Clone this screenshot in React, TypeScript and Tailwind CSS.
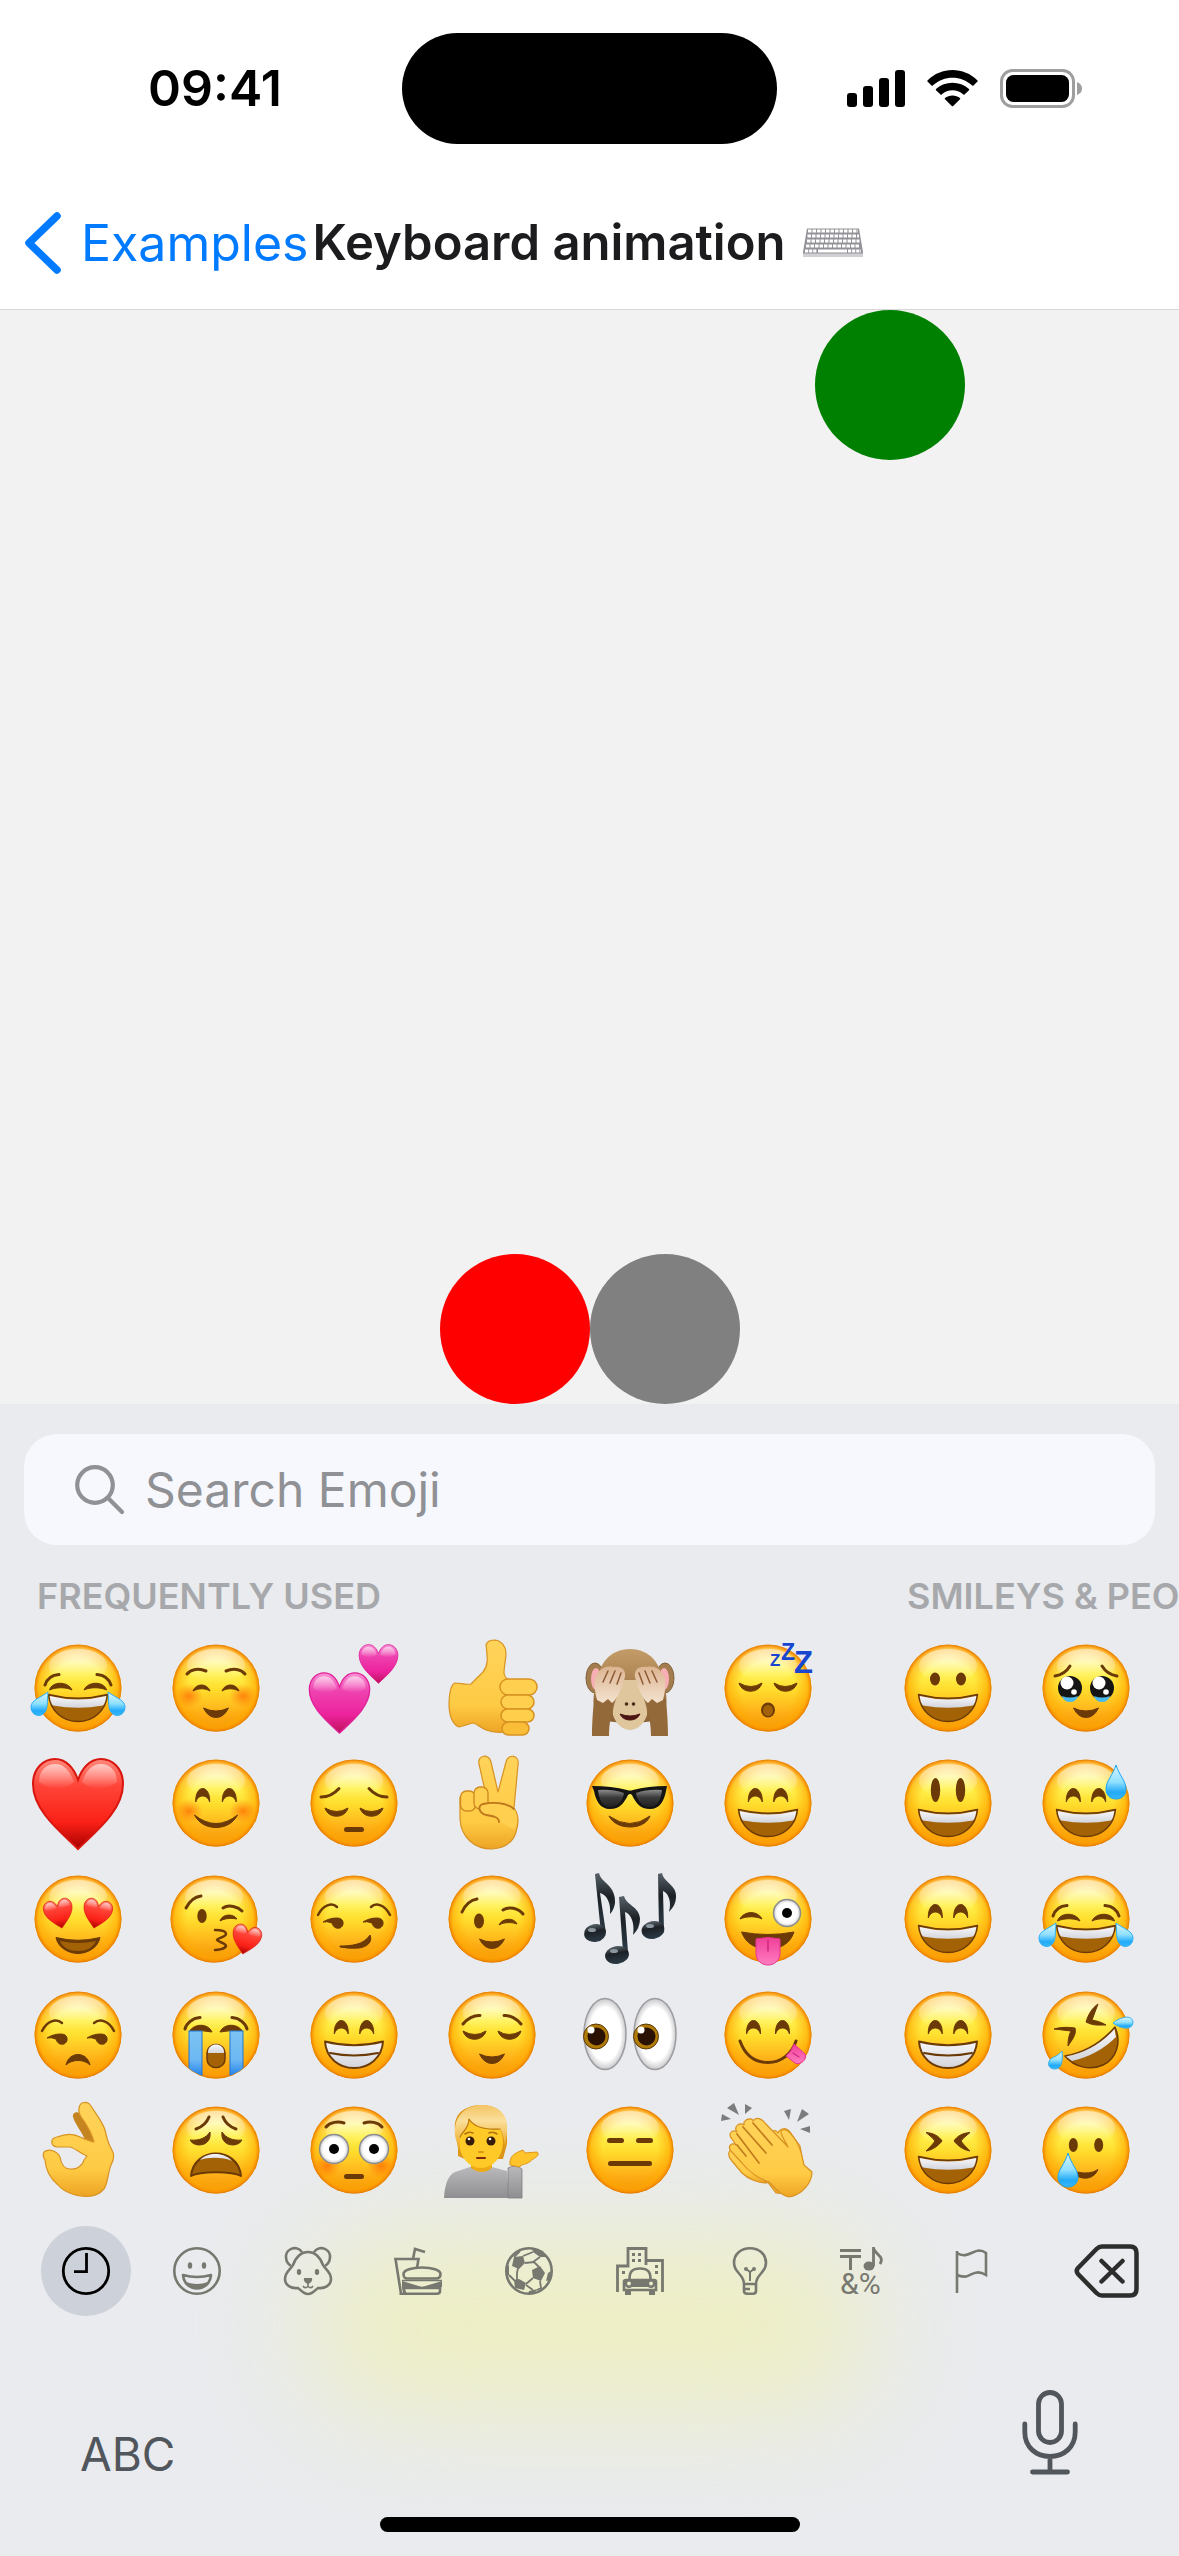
import React from "react";

type Kids = { children?: React.ReactNode };

const DARK = "#6b3a06";
const MOUTH = "#a36206";

function Defs() {
  return (
    <svg width="0" height="0" className="absolute" aria-hidden="true">
      <defs>
        <linearGradient id="face" x1="0" y1="0" x2="0" y2="1">
          <stop offset="0" stopColor="#fffce0" />
          <stop offset="0.12" stopColor="#fffcc4" />
          <stop offset="0.34" stopColor="#fff14c" />
          <stop offset="0.52" stopColor="#ffdc2c" />
          <stop offset="0.76" stopColor="#ffb41a" />
          <stop offset="1" stopColor="#f0900a" />
        </linearGradient>
        <radialGradient id="rim">
          <stop offset="0.62" stopColor="#ffab00" stopOpacity="0" />
          <stop offset="0.9" stopColor="#ffa600" stopOpacity="0.6" />
          <stop offset="0.96" stopColor="#f99200" stopOpacity="0.9" />
          <stop offset="1" stopColor="#df7800" stopOpacity="1" />
        </radialGradient>
        <radialGradient id="blush">
          <stop offset="0" stopColor="#ff6a00" stopOpacity="0.75" />
          <stop offset="1" stopColor="#ff7a10" stopOpacity="0" />
        </radialGradient>
        <linearGradient id="teeth" x1="0" y1="0" x2="0" y2="1">
          <stop offset="0" stopColor="#f7f7fa" />
          <stop offset="1" stopColor="#d3d5dc" />
        </linearGradient>
        <linearGradient id="water" x1="0" y1="0" x2="0" y2="1">
          <stop offset="0" stopColor="#d9f6ff" />
          <stop offset="0.5" stopColor="#8fe0ff" />
          <stop offset="0.8" stopColor="#22aaf8" />
          <stop offset="1" stopColor="#36b6f8" />
        </linearGradient>
        <linearGradient id="stream" x1="0" y1="0" x2="0" y2="1">
          <stop offset="0" stopColor="#7cc4f3" />
          <stop offset="0.6" stopColor="#6db8f3" />
          <stop offset="1" stopColor="#1477e6" />
        </linearGradient>
        <linearGradient id="red" x1="0" y1="0" x2="0" y2="1">
          <stop offset="0" stopColor="#ff8a7c" />
          <stop offset="0.3" stopColor="#ff4438" />
          <stop offset="0.7" stopColor="#fb2117" />
          <stop offset="1" stopColor="#a80000" />
        </linearGradient>
        <linearGradient id="pink" x1="0" y1="0" x2="0" y2="1">
          <stop offset="0" stopColor="#f993d4" />
          <stop offset="0.3" stopColor="#ef42b0" />
          <stop offset="0.7" stopColor="#ec229c" />
          <stop offset="1" stopColor="#bd1258" />
        </linearGradient>
        <linearGradient id="shine" x1="0" y1="0" x2="0" y2="1">
          <stop offset="0" stopColor="#ffffff" stopOpacity="0.85" />
          <stop offset="1" stopColor="#ffffff" stopOpacity="0" />
        </linearGradient>
        <linearGradient id="skin" x1="0" y1="0" x2="0" y2="1">
          <stop offset="0" stopColor="#ffd35a" />
          <stop offset="0.7" stopColor="#ffcb45" />
          <stop offset="1" stopColor="#eda425" />
        </linearGradient>
        <linearGradient id="tongue" x1="0" y1="0" x2="0" y2="1">
          <stop offset="0" stopColor="#f0409a" />
          <stop offset="1" stopColor="#ff7cc0" />
        </linearGradient>
        <linearGradient id="fur" x1="0" y1="0" x2="0" y2="1">
          <stop offset="0" stopColor="#c49c68" />
          <stop offset="1" stopColor="#8a6236" />
        </linearGradient>
        <linearGradient id="paw" x1="0" y1="0" x2="0" y2="1">
          <stop offset="0" stopColor="#dcb491" />
          <stop offset="1" stopColor="#f3e3cf" />
        </linearGradient>
        <linearGradient id="lens" x1="0" y1="0" x2="0" y2="1">
          <stop offset="0" stopColor="#8c8c8c" />
          <stop offset="0.45" stopColor="#3a3a3a" />
          <stop offset="1" stopColor="#202020" />
        </linearGradient>
        <linearGradient id="note" x1="0" y1="0" x2="0" y2="1">
          <stop offset="0" stopColor="#59636b" />
          <stop offset="0.4" stopColor="#1c2126" />
          <stop offset="1" stopColor="#2c3c48" />
        </linearGradient>
        <radialGradient id="white">
          <stop offset="0.75" stopColor="#ffffff" />
          <stop offset="1" stopColor="#c9c9cc" />
        </radialGradient>
        <linearGradient id="shirt" x1="0" y1="0" x2="0" y2="1">
          <stop offset="0" stopColor="#b9b9bb" />
          <stop offset="1" stopColor="#8f8f92" />
        </linearGradient>
        <linearGradient id="hair" x1="0" y1="0" x2="0" y2="1">
          <stop offset="0" stopColor="#f3c565" />
          <stop offset="0.35" stopColor="#fbdf9b" />
          <stop offset="1" stopColor="#eba416" />
        </linearGradient>
        <clipPath id="disc">
          <circle r="43" />
        </clipPath>
      </defs>
    </svg>
  );
}

const Face = ({ children }: Kids) => (
  <>
    <circle r="43.5" fill="url(#face)" />
    <circle r="43.5" fill="url(#rim)" />
    <ellipse cy="-22" rx="29" ry="17" fill="url(#shine)" opacity="0.55" />
    {children}
  </>
);

const Fill = ({ d, fill = DARK }: { d: string; fill?: string }) => <path d={d} fill={fill} stroke={fill} strokeWidth="1" strokeLinejoin="round" />;
const Line = ({ d, w = 3, c = DARK }: { d: string; w?: number; c?: string }) => (
  <path d={d} fill="none" stroke={c} strokeWidth={w} strokeLinecap="round" strokeLinejoin="round" />
);
/** Draws its children twice, the second time mirrored on the vertical axis. */
const Pair = ({ children }: Kids) => (
  <>
    <g>{children}</g>
    <g transform="scale(-1 1)">{children}</g>
  </>
);

const Grin = () => (
  <>
    <path d="M-29.5 6.5Q0 14 29.5 6.5C28 23 15 33.5 0 33.5C-15 33.5-28 23-29.5 6.5Z" fill={MOUTH} stroke={DARK} strokeWidth="1.5" strokeLinejoin="round" />
    <path d="M-28.3 8Q0 15 28.3 8Q27.5 15 25 17.5Q0 22-25 17.5Q-27.5 15-28.3 8Z" fill="url(#teeth)" />
  </>
);
const ToothyGrin = () => (
  <>
    <path d="M-29 6.5Q0 14 29 6.5C28 23 15 33 0 33C-15 33-28 23-29 6.5Z" fill="url(#teeth)" stroke={DARK} strokeWidth="2" strokeLinejoin="round" />
    <Line d="M-24 18Q0 23 24 18" w={2} />
  </>
);
const Arches = ({ x = 12.7 }: { x?: number }) => (
  <Pair>
    <g transform={`translate(${x} 0)`}>
      <Fill d="M-7 -1C-7.500 -19 7.500 -19 7 -1C4.500 -9-4.500 -9-7 -1Z" />
    </g>
  </Pair>
);
const Lids = ({ y = 0 }: { y?: number }) => (
  <g transform={`translate(0 ${y})`}>
    <Pair>
      <Fill d="M-29 -4Q-17 3-6 -4C-9 7-26 7-29 -4Z" />
    </Pair>
  </g>
);
const SmallSmile = () => <Fill d="M-12.500 20Q0 26 12.500 20Q8 29.500 0 29.500Q-8 29.500-12.500 20Z" />;
const Dash = ({ x, y, w }: { x: number; y: number; w: number }) => <rect x={x} y={y} width={w} height="5" rx="2.5" fill={DARK} />;
const Blush = () => (
  <Pair>
    <ellipse cx="-27" cy="8" rx="14" ry="12" fill="url(#blush)" />
  </Pair>
);
const Heart = ({ x, y, s, r = 0, fill }: { x: number; y: number; s: number; r?: number; fill: string }) => (
  <g transform={`translate(${x} ${y}) rotate(${r}) scale(${s})`}>
    <path
      d="M0 45C-16 29-45 7-45 -20C-45 -36-34 -45-23 -45C-12 -45-4 -36 0 -24C4 -36 12 -45 23 -45C34 -45 45 -36 45 -20C45 7 16 29 0 45Z"
      fill={`url(#${fill})`}
      stroke={fill === "red" ? "#d8150f" : "#e0209a"}
      strokeWidth="2"
    />
    <path d="M-39 -22C-39 -34-31 -40-23 -40C-14 -40-8 -33-4 -22Q-20 -8-39 -22ZM39 -22C39 -34 31 -40 23 -40C14 -40 8 -33 4 -22Q20 -8 39 -22Z" fill="url(#shine)" opacity="0.7" />
  </g>
);
const SideTears = () => (
  <Pair>
    <path d="M-30 4C-31 14-30 20-33 24C-37 30-47 28-47 19C-47 12-38 10-30 4Z" fill="url(#water)" stroke="#2bb0f7" strokeWidth="1" />
  </Pair>
);
const JoyEyes = () => (
  <Pair>
    <Line d="M-33 -3C-31 -9-26 -13-19 -13.500" />
    <Fill d="M-28.500 2C-26 -7-10 -7-6 2C-12 -1-22 -1-28.500 2Z" />
  </Pair>
);
const SideEyes = () => (
  <>
    <Fill d="M-31 3C-25 -1-16 -2-13 0C-10 2-10 7-14 9C-18 10-21 8-22 4Q-27 2-31 3Z" />
    <Fill d="M9 3C15 -1 24 -2 27 0C30 2 30 7 26 9C22 10 19 8 18 4Q13 2 9 3Z" />
  </>
);
const Hand = ({ d }: { d: string }) => <path d={d} fill="url(#skin)" stroke="#d89222" strokeWidth="1.2" strokeLinejoin="round" />;

const EMOJI: Record<string, React.ReactNode> = {
  "tears of joy": <Face><JoyEyes /><Grin /><SideTears /></Face>,
  relaxed: (
    <Face>
      <Blush />
      <Pair><Line d="M-29 -14C-25 -19-17 -20-10 -17" /><Fill d="M-23 3C-20 -5-9 -5-6 3C-11 0-17 0-23 3Z" /></Pair>
      <SmallSmile />
    </Face>
  ),
  "two hearts": <><Heart x={-14.5} y={15} s={0.67} fill="pink" /><Heart x={24.5} y={-24} s={0.43} fill="pink" /></>,
  "thumbs up": (
    <g>
      <Hand d="M-37 -5C-32 -5-26 -3-21 -4C-17 -8-12 -13-9 -16C-4 -22-4 -28-6 -43C-5 -47-1 -48 3 -48C10 -47 14 -41 14 -35C14 -28 12 -22 12 -15Q13 -10 16 -9L14 44C6 45-1 44-6 42C-12 39-15 36-19 35C-24 36-28 38-33 39C-39 37-43 28-43 16C-43 6-41 -4-37 -5Z" />
      <rect x="8" y="-9" width="37" height="16" rx="8" fill="#ffd04f" stroke="#d89222" strokeWidth="1.5" />
      <rect x="9" y="7" width="33" height="14" rx="7" fill="#ffd04f" stroke="#d89222" strokeWidth="1.5" />
      <rect x="9" y="21" width="33" height="13" rx="6.5" fill="#ffce4a" stroke="#d89222" strokeWidth="1.5" />
      <rect x="10" y="34" width="27" height="13" rx="6.5" fill="#f9bd38" stroke="#d89222" strokeWidth="1.5" />
    </g>
  ),
  "see no evil": (
    <g>
      <Pair>
        <ellipse cx="-35" cy="-10" rx="9" ry="15" fill="#a37d4e" stroke="#80603a" strokeWidth="1" />
        <ellipse cx="-34" cy="-9" rx="5" ry="11" fill="#f7aeb4" />
      </Pair>
      <path d="M0 -39C20 -39 31 -24 33 -6C38 6 38 22 30 31C20 36-20 36-30 31C-38 22-38 6-33 -6C-31 -24-20 -39 0 -39Z" fill="url(#fur)" />
      <path d="M-6 -8H6C12 6 18 18 17 27C14 37 6 42 0 42C-6 42-14 37-17 27C-18 18-12 6-6 -8Z" fill="#dfc69d" />
      <Fill d="M-10 26Q0 30 10 26Q7 32 0 32Q-7 32-10 26Z" fill="#4c1512" />
      <circle cx="-3.500" cy="16" r="1.8" fill="#4b2b15" /><circle cx="3.500" cy="16" r="1.8" fill="#4b2b15" />
      <Pair>
        <path d="M-36 10L-16 12C-18 24-21 34-21 48H-38C-38 34-37 24-36 10Z" fill="#94693a" />
        <path d="M-35 -9C-33 -18-24 -23-17 -21C-8 -22-4 -18-5 -11C-8 0-12 10-18 15L-22 11L-27 15L-33 12C-35 4-36 -2-35 -9Z" fill="url(#paw)" />
        <Line d="M-27 -6L-22 -17M-20 -5L-15 -17M-13 -4L-9 -15" w={1.5} c="#8c5a35" />
      </Pair>
    </g>
  ),
  sleeping: (
    <Face>
      <Lids y={-1} />
      <ellipse cy="22" rx="7" ry="7.500" fill={DARK} /><ellipse cy="22.500" rx="5" ry="5.500" fill={MOUTH} />
      <g fill="#1846cf" fontFamily="Liberation Sans, sans-serif" fontWeight="700">
        <text x="2" y="-22" fontSize="17">Z</text>
        <text x="13" y="-28" fontSize="23">Z</text>
        <text x="26" y="-15" fontSize="31">Z</text>
      </g>
    </Face>
  ),
  heart: <Heart x={0} y={1} s={1} fill="red" />,
  blush: <Face><Blush /><Arches x={13.3} /><Fill d="M-21.500 12Q0 29 21.500 12C17 21 8 24.500 0 24.500C-8 24.500-17 21-21.500 12Z" /></Face>,
  pensive: <Face><Pair><Line d="M-33 -6C-25 -6-19 -10-15 -14.500" /></Pair><Lids y={9} /><Dash x={-10} y={24} w={20} /></Face>,
  victory: (
    <g>
      <Hand d="M-13 -39C-15 -48-3 -50-1 -41L6 -11L14 -41C16 -50 28 -48 26 -38L22 5C27 12 27 20 24 29C21 40 12 45 0 46C-18 46-31 34-32 16V-6L-6 -8Z" />
      <rect x="-31.500" y="-12" width="15" height="20" rx="6" fill="#ffcf50" stroke="#d18c20" strokeWidth="1.4" />
      <rect x="-18" y="-16" width="14" height="22" rx="6" fill="#ffcf50" stroke="#d18c20" strokeWidth="1.4" />
      <path d="M-9 2C0 -1 16 0 21 5C26 10 26 20 22 26C14 23 8 19 7 15C4 13-6 12-10 10C-14 7-13 3-9 2Z" fill="#ffcf50" />
      <Line d="M22 6C14 -1 0 -1-9 1C-15 3-13 10-6 12C1 13 7 14 7 19" w={1.8} c="#bd761a" />
    </g>
  ),
  sunglasses: (
    <Face>
      <path d="M-38 -17Q-18 -17-3 -13Q0 -12 3 -13Q18 -17 37 -17L36 -12C34 -2 30 6 20 6C10 6 6 0 2 -8Q0 -10-2 -8C-6 0-10 6-20 6C-30 6-34 -2-36 -12Z" fill="#141414" />
      <path d="M-32 -13Q-18 -14-6 -10C-7 -2-13 4-20 4C-28 4-31 -4-32 -13ZM32 -13Q18 -14 6 -10C7 -2 13 4 20 4C28 4 31 -4 32 -13Z" fill="url(#lens)" />
      <Fill d="M-21 13Q0 28 20 13C17 21 8 24 0 24C-8 24-17 21-21 13Z" />
    </Face>
  ),
  smile: <Face><Arches /><Grin /></Face>,
  "heart eyes": (
    <Face>
      <Heart x={-19} y={-5} s={0.32} r={-12} fill="red" /><Heart x={19} y={-5} s={0.32} r={12} fill="red" />
      <Fill d="M-22 18.500Q0 24 22 18.500C20 29 9 34.500 0 34.500C-9 34.500-20 29-22 18.500Z" />
      <path d="M-18 22Q0 26 18 22C15 29 8 32 0 32C-8 32-15 29-18 22Z" fill={MOUTH} />
    </Face>
  ),
  kiss: (
    <g transform="translate(-2 0)">
      <Face>
        <Line d="M-28 -11C-25 -17-20 -22-13 -23" /><Line d="M9 -11C15 -15 24 -12 28 -8" />
        <ellipse cx="-12" cy="-3" rx="4.700" ry="7" fill={DARK} />
        <Fill d="M6 2C8 -5 19 -6 23 0C18 -1 11 -1 6 2Z" />
        <Line d="M1 11C6 11 12 12 12 15C12 18 3 19 3 21C4 23 12 24 12 27C11 30 4 31 1 31" w={2.5} />
        <Heart x={32} y={21} s={0.32} r={13} fill="red" />
      </Face>
    </g>
  ),
  smirk: <Face><Pair><Line d="M-36 -4C-31 -14-22 -17-17 -12" w={2.5} /></Pair><SideEyes /><Fill d="M-14 27C-4 27 10 26 16 16C19 23 13 28 5 29Q-4 30-14 28Z" /></Face>,
  wink: (
    <Face>
      <Line d="M-30 -7C-27 -14-21 -19-15 -20" /><Line d="M11 -9C17 -13 26 -11 31 -5" />
      <ellipse cx="-13" cy="2" rx="5" ry="7.500" fill={DARK} />
      <Fill d="M7 6C10 -1 22 -2 25 5C20 3 12 3 7 6Z" /><SmallSmile />
    </Face>
  ),
  "musical notes": (
    <g fill="url(#note)">
      <path d="M-35 -45L-31 -46C-29 -36-14 -34-15 -16Q-16 -9-20 -5C-19 -16-23 -24-30 -26L-24 14H-29Z" />
      <ellipse cx="-35" cy="14" rx="11" ry="9" transform="rotate(-10 -35 14)" />
      <path d="M-11 -22L-6 -23C-4 -14 10 -12 10 0Q10 9 3 16C5 4 1 -5-5 -7L-2 33H-7Z" />
      <ellipse cx="-13" cy="36" rx="12" ry="9" transform="rotate(-10 -13 36)" />
      <path d="M28 -45L32 -46C34 -36 47 -34 46 -22Q46 -14 39 -7C42 -18 38 -26 33 -28L34 11H29Z" />
      <ellipse cx="23" cy="11" rx="11.500" ry="9" transform="rotate(-10 23 11)" />
      <g fill="#8b969e"><ellipse cx="-38" cy="11" rx="4" ry="2" /><ellipse cx="-16" cy="32" rx="4" ry="2" /><ellipse cx="20" cy="7" rx="4" ry="2" /></g>
    </g>
  ),
  "winking tongue": (
    <Face>
      <Fill d="M-28 0C-24 -8-11 -9-6 0C-12 -3-21 -3-28 0Z" />
      <circle cx="19" cy="-6" r="13.500" fill="url(#white)" stroke="#8d8d8d" strokeWidth="1.500" /><circle cx="19" cy="-6" r="5" fill="#050505" />
      <Fill d="M-26.500 13Q0 18 26 13C22 25 12 30 0 30C-12 30-22 25-26.500 13Z" />
      <path d="M-12 20Q0 17 12 20V34C12 42 6 46 0 46C-6 46-12 42-12 34Z" fill="url(#tongue)" stroke="#e83291" strokeWidth="1" /><Line d="M0 21V32" w={1.5} c="#cf2580" />
    </Face>
  ),
  unamused: <Face><Pair><Line d="M-36 -4C-31 -14-22 -17-16 -12" w={2.5} /></Pair><SideEyes /><Fill d="M-12 30C-9 16 9 16 12 30C6 24-6 24-12 30Z" /></Face>,
  sobbing: (
    <Face>
      <Pair>
        <Line d="M-31 -6C-30 -11-24 -17-16 -17.500" />
        <Fill d="M-27 -3C-22 -12-8 -12-4 -3Q-16 -6-27 -3Z" />
      </Pair>
      <g clipPath="url(#disc)">
        <rect x="-27" y="-4" width="13" height="48" fill="url(#stream)" stroke="#2277d8" strokeWidth="1" />
        <rect x="14" y="-4" width="13" height="48" fill="url(#stream)" stroke="#2277d8" strokeWidth="1" />
      </g>
      <rect x="-9" y="9.500" width="18" height="23" rx="8.500" fill={MOUTH} stroke={DARK} strokeWidth="1.500" />
      <path d="M-8 18V17C-8 7 8 7 8 17V18Z" fill="url(#teeth)" />
    </Face>
  ),
  beaming: <Face><Arches /><ToothyGrin /></Face>,
  relieved: <Face><Pair><Line d="M-29 -11C-25 -16-18 -20-12 -19.500" /></Pair><Lids /><g transform="translate(0 -1)"><SmallSmile /></g></Face>,
  eyes: (
    <g>
      {[-25, 25].map((x) => (
        <g key={x} transform={`translate(${x} -1)`}>
          <ellipse rx="21" ry="35.500" fill="url(#white)" stroke="#9c9ca0" strokeWidth="1.500" />
          <circle cx="-9" cy="2.500" r="12.500" fill="#b07c08" stroke="#5a3608" strokeWidth="1" />
          <circle cx="-8.500" cy="2.500" r="9" fill="#2a1102" /><circle cx="-14" cy="-4" r="3.500" fill="#fff" />
        </g>
      ))}
    </g>
  ),
  yum: (
    <Face>
      <Arches x={14.5} /><Line d="M-28 6C-23 20-13 27.500 0 27.500C13 27.500 24 19 28 6" />
      <path d="M26 9L37 19C40 24 32 31 27 28L18 21Q24 16 26 9Z" fill="url(#tongue)" stroke="#e83291" strokeWidth="1" /><Line d="M25 18L31 22" w={1.2} c="#cf2580" />
    </Face>
  ),
  "ok hand": (
    <g>
      <path d="M-5 -33C-6 -38 1 -40 4 -34L18 -8L8 -8C4 -18-3 -26-5 -33Z" fill="#c58420" />
      <Hand d="M1 -42C2 -49 10 -49 13 -44C20 -33 25 -27 27 -20C29 -12 30 -6 33 -2C37 5 36 9 33 15C29 25 30 36 25 40C18 47 10 47 2 46C-9 44-16 40-20 35C-29 27-32 20-33 10C-35 7-35 4-34 2C-29 -2-21 1-18 7C-17 13-15 19-8 19C-1 20 5 15 6 10L9 6C3 4-3 -2-8 -3H-21C-28 -4-28 -12-21 -13C-13 -16-5 -17 2 -13C7 -11 11 -9 16 -8C14 -16 10 -23 6 -29C2 -34 0 -38 1 -42Z" />
    </g>
  ),
  weary: (
    <Face>
      <Pair><Line d="M-20 -21C-14 -23-9 -28-7 -33" /><Fill d="M-26 -10C-17 -9-10 -12-6 -18C-4 -3-22 -2-26 -10Z" /></Pair>
      <path d="M-25 26C-22 -4 22 -4 25 26C16 21-16 21-25 26Z" fill={MOUTH} stroke={DARK} strokeWidth="2" strokeLinejoin="round" />
      <path d="M-16 10C-8 2 8 2 16 11C8 7-8 7-16 10Z" fill="url(#teeth)" />
    </Face>
  ),
  flushed: (
    <Face>
      <g transform="translate(0 8)"><Blush /></g>
      <Pair>
        <Line d="M-28 -23C-24 -28-16 -29-10 -27" />
        <circle cx="-20" cy="-1" r="14.500" fill="url(#white)" stroke="#8d8d8d" strokeWidth="1.500" /><circle cx="-20" cy="-1" r="5" fill="#050505" />
      </Pair>
      <Dash x={-10} y={24} w={20} />
    </Face>
  ),
  "tipping hand": (
    <g>
      <path d="M-37 -20C-39 -40-22 -45-10 -45C4 -45 16 -36 15 -20V-6L11 9H4L-27 9L-34 6V-2Z" fill="#dc9516" />
      <path d="M-48 48C-47 32-43 23-34 21L-22 17H0L15 21L17 48Z" fill="url(#shirt)" />
      <path d="M-21 8H0V18Q-10 26-21 18Z" fill="#edaa16" />
      <ellipse cx="-11" cy="-8" rx="22" ry="26" fill="#ffc928" />
      <path d="M-37 -14C-39 -38-22 -45-10 -45C5 -45 17 -37 15 -18L13 -3C12 -12 11 -17 8 -21C-6 -20-18 -23-23 -31C-23 -22-30 -18-32 -12L-33 0Z" fill="url(#hair)" />
      <Line d="M8 -21C-6 -20-18 -23-23 -31C-23 -22-29 -19-32 -13" w={1.2} c="#b9780f" />
      <circle cx="-22" cy="-9" r="4.500" fill="#351c08" /><circle cx="-1" cy="-9" r="4.500" fill="#351c08" /><circle cx="-23" cy="-11" r="1.300" fill="#fff" /><circle cx="-2" cy="-11" r="1.300" fill="#fff" />
      <Line d="M-27 -16Q-23 -19-19 -17M-3 -17Q1 -19 5 -16" w={1.6} c="#b27410" /><Line d="M-13 2H-9" w={2} c="#dd9612" /><Line d="M-15 8H-7" w={2} c="#83260f" />
      <path d="M16 18Q23 14 30 19V48H16Z" fill="url(#shirt)" stroke="#7d7d80" strokeWidth="0.800" />
      <path d="M18 15C17 6 23 3 31 0L33 3L45 2C48 4 45 7 41 9C37 13 34 14 29 15L28 17Z" fill="#ffc42a" stroke="#df9718" strokeWidth="1" />
    </g>
  ),
  expressionless: <Face><Dash x={-23} y={-12} w={17} /><Dash x={6} y={-12} w={17} /><Dash x={-22} y={11} w={44} /></Face>,
  clapping: (
    <g>
      <path d="M-41 -42L-34 -47L-29 -35ZM-23 -46L-16 -42L-23 -36ZM-46 -36L-37 -31L-47 -29ZM16 -39L23 -41L21 -30ZM34 -41L41 -36L29 -28ZM32 -21L42 -24V-17Z" fill="#7b7c7e" />
      <Hand d="M2 -14C3 -20 8 -21 10 -17C12 -22 18 -23 22 -18L32 -4L36 18L20 44L8 43L-2 30Z" />
      <Hand d="M-35 -1C-40 0-41 6-36 11L-26 23C-20 29-10 33-1 33Z" />
      <Hand d="M-24 -28C-20 -33-15 -31-15 -29C-12 -34-6 -31-3 -27L20 -3C17 -9 12 -16 13 -19C17 -23 22 -18 26 -12C34 -2 34 8 36 15L44 22C44 33 34 45 21 47C14 46 9 40 1 32C-9 29-20 21-26 13L-37 1C-41 -4-36 -8-32 -5L-36 -11C-41 -17-35 -21-31 -18C-35 -24-28 -28-24 -25Z" />
      <Line d="M-15 -27L4 -5M-25 -23L-2 3M-31 -16L-9 13M-31 -5L-22 6" w={1.7} c="#c07c1c" />
    </g>
  ),
  grinning: <Face><Pair><ellipse cx="-13" cy="-9" rx="5" ry="6.500" fill={DARK} /></Pair><Grin /></Face>,
  "holding back tears": (
    <Face>
      <Pair><Line d="M-31 -12C-25 -13-19 -17-16 -22" /></Pair>
      {[-16, 16].map((x) => (
        <g key={x} transform={`translate(${x} 0)`}>
          <circle r="12" fill="#151515" /><circle cx="-3" cy="-5" r="6.500" fill="#fff" /><circle cx="4" cy="4" r="2.800" fill="#fff" />
          <path d="M-8 8Q0 11 8 8Q6 14 0 14Q-6 14-8 8Z" fill="#48b9ec" />
        </g>
      ))}
      <SmallSmile />
    </Face>
  ),
  smiley: <Face><Pair><ellipse cx="-12.500" cy="-13" rx="4.700" ry="12" fill={DARK} /></Pair><Grin /></Face>,
  "sweat smile": (
    <Face><Arches /><Grin /><path d="M30 -38C33 -28 40 -22 40 -14C40 -8 36 -4 30 -4C24 -4 20 -8 20 -14C20 -22 27 -28 30 -38Z" fill="url(#water)" stroke="#1aa6f5" strokeWidth="1" /></Face>
  ),
  rofl: (
    <Face>
      <Fill d="M-32 -6C-26 -8-18 -8-11 -7C-9 0-15 6-18 11C-18 4-17 0-15 -4Z" /><Fill d="M12 -31C6 -27 2 -20 0 -13C7 -9 14 -10 20 -10C15 -13 11 -14 6 -15Z" />
      <path d="M-21 21Q8 16 29 -8C36 8 30 24 17 30C4 36-12 32-21 21Z" fill={MOUTH} stroke={DARK} strokeWidth="1.500" strokeLinejoin="round" />
      <path d="M-20 21.500Q9 16 28.500 -6L30 2Q12 20-14 26Z" fill="url(#teeth)" />
      <path d="M27 -12C34 -18 46 -21 47 -13C47 -5 36 -5 27 -12Z" fill="url(#water)" stroke="#36b0ee" strokeWidth="1" />
      <path d="M-24 16C-23 25-24 34-31 34C-39 34-39 26-34 23C-30 21-27 20-24 16Z" fill="url(#water)" stroke="#36b0ee" strokeWidth="1" />
    </Face>
  ),
  laughing: <Face><Pair><Fill d="M-22 -17.500C-15 -17-9 -14-6 -9C-9 -5-15 0-22 1C-18 -3-15 -6-13 -9C-15 -12-18 -14-22 -17.500Z" /></Pair><Grin /></Face>,
  "smile with tear": (
    <Face>
      <Pair><ellipse cx="-12.700" cy="-5" rx="4.500" ry="7" fill={DARK} /></Pair>
      <Fill d="M-9 22Q4 25 12 19.500C8 29-2 30-9 26Z" />
      <path d="M-18 3C-15 14-8 20-8 27C-8 33-12 37-18 37C-24 37-28 33-28 27C-28 20-21 14-18 3Z" fill="url(#water)" stroke="#1aa6f5" strokeWidth="1" />
    </Face>
  ),
};

const FREQUENT = [
  "tears of joy", "relaxed", "two hearts", "thumbs up", "see no evil", "sleeping",
  "heart", "blush", "pensive", "victory", "sunglasses", "smile",
  "heart eyes", "kiss", "smirk", "wink", "musical notes", "winking tongue",
  "unamused", "sobbing", "beaming", "relieved", "eyes", "yum",
  "ok hand", "weary", "flushed", "tipping hand", "expressionless", "clapping",
];
const SMILEYS = [
  "grinning", "holding back tears",
  "smiley", "sweat smile",
  "smile", "tears of joy",
  "beaming", "rofl",
  "laughing", "smile with tear",
];

function EmojiSection({ title, names, grid }: { title: string; names: string[]; grid: string }) {
  return (
    <section className="shrink-0">
      <h2 className="mb-3.5 pt-8 pl-7 text-[36px] leading-[39px] font-semibold whitespace-nowrap text-[#a7a8ab]">{title}</h2>
      <div className={grid}>
        {names.map((name) => (
          <button key={name} type="button" aria-label={name} className="flex items-center justify-center">
            <svg viewBox="-48 -48 96 96" className="size-24 overflow-visible" aria-hidden="true">{EMOJI[name]}</svg>
          </button>
        ))}
      </div>
    </section>
  );
}

const Glyph = ({ children }: Kids) => (
  <svg viewBox="-24 -24 48 48" className="size-12 overflow-visible" fill="none" stroke="currentColor" strokeWidth="2.6" aria-hidden="true">{children}</svg>
);

const CATEGORIES: { name: string; icon: React.ReactNode }[] = [
  { name: "Recent", icon: <Glyph><circle r="22.700" strokeWidth="2.800" /><path d="M0.500 -18V0.700H-12" strokeWidth="2.800" /></Glyph> },
  {
    name: "Smileys",
    icon: (
      <Glyph>
        <circle r="22.700" />
        <g fill="currentColor" stroke="none"><ellipse cx="-7" cy="-5.500" rx="2.200" ry="3.200" /><ellipse cx="7" cy="-5.500" rx="2.200" ry="3.200" /><path d="M-11 11Q0 15 11 11Q6 18 0 18Q-6 18-11 11Z" /></g>
        <path d="M-14 4Q0 8 14 4C13 13 7 17.500 0 17.500C-7 17.500-13 13-14 4Z" strokeLinejoin="round" />
      </Glyph>
    ),
  },
  {
    name: "Animals",
    icon: (
      <Glyph>
        <path d="M-15 -6C-12 -14-7 -19 0 -19C7 -19 12 -14 15 -6C17 -2 23 1 23 8C23 14 17 18 10 17C7 19 5 23 0 23C-5 23-7 19-10 17C-17 18-23 14-23 8C-23 1-17 -2-15 -6Z" />
        <path d="M-17 -5C-23 -9-24 -18-18 -21.500C-14 -24-9 -23-6 -19M17 -5C23 -9 24 -18 18 -21.500C14 -24 9 -23 6 -19" />
        <g fill="currentColor" stroke="none"><ellipse cx="-9" cy="1" rx="2.200" ry="3" /><ellipse cx="9" cy="1" rx="2.200" ry="3" /><path d="M-4 7H4Q5 11 0 13Q-5 11-4 7Z" /></g>
        <path d="M0 12V16M-5 15Q-3 18 0 15.500Q3 18 5 15" strokeWidth="1.600" />
      </Glyph>
    ),
  },
  {
    name: "Food",
    icon: (
      <Glyph>
        <path d="M-17 22.700L-22.500 -12H0.500L-1 -3M-18.500 22.700H-13L-15 16M-5 -12L-3 -22L7 -19" />
        <path d="M-14.500 3C-14.500 -1-6 -3.500 4 -3.500C14 -3.500 22.500 -1 22.500 3C22.500 6 21 7.500 18 7.500H-11C-13 7.500-14.500 6-14.500 3ZM-14 17H22V20C22 22 21 22.700 19 22.700H-11C-13 22.700-14 22-14 20Z" />
        <path d="M-16 10L4 16L24 10V16H-16Z" fill="currentColor" stroke="none" /><path d="M-16 9.500H24" strokeWidth="1.500" />
      </Glyph>
    ),
  },
  {
    name: "Activity",
    icon: (
      <Glyph>
        <circle r="22.700" />
        <g fill="currentColor" stroke="none">
          <path d="M-15 -14L-6 -15L-4 -8L-10 -2L-17 -5ZM3 -1L11 -5L16 2L12 10L4 7ZM-15 9L-10 8L-3 12L-5 19L-14 17ZM3 -23L14 -20L17 -14L11 -14L4 -19ZM19 2L22 0L21 9L17 10ZM0 20L9 18L4 23H-1ZM-23 -3L-20 -6L-20 4L-22 5Z" />
        </g>
        <path d="M-4 -8L5 -9L10 -4M-11 -3L-12 2V10M-3 13L4 7M11 -14L4 -9M11 10L12 17L8 19M-6 -15L4 -19M-20 4L-14 10M-3 14L4 19M-15 -14L-9 -20" strokeWidth="1.800" />
      </Glyph>
    ),
  },
  {
    name: "Travel",
    icon: (
      <Glyph>
        <path d="M-22.500 21V-5H-12V-22.500H6V-10.500H22.500V21M6 -11V-6" strokeWidth="2.800" />
        <path d="M-10.500 8C-10.500 1-8 -2.500 0 -2.500C8 -2.500 10.500 1 10.500 8" />
        <path d="M-16 11Q-16 9-14 9H14Q16 9 16 11V19H-16Z" />
        <g fill="currentColor" stroke="none">
          <path d="M-8 8H8V16H-8ZM-15 19H-9V24H-15ZM9 19H15V24H9ZM-8 -18H-5V-15H-8ZM-2 -18H1V-15H-2ZM-8 -12H-5V-9H-8ZM-2 -12H1V-9H-2ZM15 -6H18V-3H15ZM15 0H18V3H15ZM-18 0H-15V3H-18Z" />
        </g>
        <circle cx="-11" cy="12.500" r="3.200" /><circle cx="11" cy="12.500" r="3.200" />
      </Glyph>
    ),
  },
  {
    name: "Objects",
    icon: (
      <Glyph>
        <path d="M-6 13C-6 3-16 2-16 -8C-16 -17-9 -22.700 0 -22.700C9 -22.700 16 -17 16 -8C16 2 6 3 6 13V20Q6 22.700 3 22.700H-3Q-6 22.700-6 20ZM-6 13H6M-5 18H0" />
        <path d="M0 10V1L-4 -2M0 1L4 -2" strokeWidth="2" /><circle cx="-4" cy="-2" r="2" fill="currentColor" stroke="none" /><circle cx="4" cy="-2" r="2" fill="currentColor" stroke="none" />
      </Glyph>
    ),
  },
  {
    name: "Symbols",
    icon: (
      <Glyph>
        <path d="M-21 -20.500H0M-21 -14.500H0M-10.500 -14V-1" strokeWidth="3" />
        <path d="M12.500 -24V-5M12.500 -23C14 -16 24 -15 19 -7" strokeWidth="2.800" /><ellipse cx="8" cy="-5" rx="5.500" ry="4.500" fill="currentColor" stroke="none" />
        <text x="-21" y="23" fontSize="30" fontFamily="Roboto, sans-serif" fill="currentColor" stroke="none">&amp;%</text>
      </Glyph>
    ),
  },
  { name: "Flags", icon: <Glyph><path d="M-15 22V-20M-15 -18C-6 -12 0 -20 7 -20.500Q11 -20.500 14 -18V4C4 -2 0 4-6 5.500Q-11 6-15 4" /></Glyph> },
];

function KeyboardGlyph() {
  return (
    <svg viewBox="0 0 62 30" className="ml-4 h-[30px] w-[62px]" role="img" aria-label="keyboard">
      <path d="M5 0.500H57L61 24V27Q61 29 59 29H3Q1 29 1 27V24Z" fill="#929298" />
      <path d="M1 25.500H61V27.500Q61 29 59 29H3Q1 29 1 27.500Z" fill="#cfcfd4" />
      <g stroke="#fff" fill="none">
        <path d="M6 3H56M5.500 8H57M5 13H57.500M4 18H58" strokeWidth="3" strokeDasharray="3.500 1" />
        <path d="M3 23H15M46 23H59" strokeWidth="3" strokeDasharray="3.200 0.900" />
        <path d="M16 23H45" strokeWidth="3" />
      </g>
    </svg>
  );
}

function StatusBar() {
  return (
    <div className="flex h-[177px] items-start pt-[33px]">
      <div className="flex h-[111px] flex-1 items-center justify-center pl-7 text-[50px] font-semibold text-black">09:41</div>
      <div className="h-[111px] w-[375px] shrink-0 rounded-full bg-black" />
      <div className="flex h-[111px] flex-1 items-center justify-center gap-[22px] pr-7">
        <svg viewBox="0 0 58 38" className="h-[38px] w-[58px]" aria-label="Signal" role="img">
          <rect y="23" width="10" height="14" rx="3" /><rect x="16" y="16" width="10" height="21" rx="3" /><rect x="32" y="8" width="10" height="29" rx="3" /><rect x="48" width="10" height="37" rx="3" />
        </svg>
        <svg viewBox="0 0 51 37" className="h-[37px] w-[51px]" aria-label="Wi-Fi" role="img">
          <path d="M0.500 10.500C14 -3.500 37 -3.500 50.500 10.500Q51 11 50.500 11.600L46.500 15.500Q45.800 16 45.200 15.500C34 5 17 5 5.800 15.500Q5.200 16 4.500 15.500L0.500 11.600Q0 11 0.500 10.500Z" />
          <path d="M9 19C18 10.500 33 10.500 42 19Q42.500 19.500 42 20.200L37.500 24.400Q37 25 36.300 24.400C30 19 21 19 14.700 24.400Q14 25 13.500 24.400L9 20.200Q8.500 19.500 9 19Z" />
          <path d="M18 28C22 24.500 29 24.500 33 28Q33.600 28.600 33 29.200L26.200 36Q25.500 36.600 24.800 36L18 29.200Q17.400 28.600 18 28Z" />
        </svg>
        <svg viewBox="0 0 82 39" className="h-[39px] w-[82px]" aria-label="Battery" role="img">
          <rect x="1.500" y="1.500" width="72" height="36" rx="11" fill="none" stroke="#9e9e9e" strokeWidth="3" /><rect x="6" y="6" width="63" height="27" rx="7.500" /><path d="M77 13Q82 15 82 19.500Q82 24 77 26Z" fill="#9e9e9e" />
        </svg>
      </div>
    </div>
  );
}

export default function App() {
  return (
    <div className="flex min-h-screen flex-col overflow-hidden bg-[#f2f2f2] font-[Inter,'Liberation_Sans',sans-serif]">
      <Defs />
      <header className="border-b border-[#d8d8d8] bg-white">
        <StatusBar />
        <nav className="flex h-[132px] items-center pl-6">
          <a href="#examples" className="flex shrink-0 items-center gap-5 text-[50px] text-[#007aff]">
            <svg viewBox="0 0 37 62" className="h-[62px] w-[37px]" fill="none" stroke="currentColor" strokeWidth="7.500" strokeLinecap="round" strokeLinejoin="round" aria-hidden="true"><path d="M33 4L5 31L33 58" /></svg>
            Examples
          </a>
          <h1 className="ml-1 flex items-center text-[49px] font-semibold whitespace-nowrap text-[#1c1c1e]">Keyboard animation<KeyboardGlyph /></h1>
        </nav>
      </header>

      <main className="flex flex-1 flex-col justify-between">
        <div className="ml-[815px] size-[150px] rounded-full bg-[#008000]" />
        <div className="flex justify-center">
          <div className="size-[150px] rounded-full bg-[#ff0000]" />
          <div className="size-[150px] rounded-full bg-[#808080]" />
        </div>
      </main>

      <div className="relative isolate overflow-hidden bg-[#e9ebee] pt-[30px]">
        <div className="absolute inset-x-[26%] bottom-[145px] -z-10 h-[170px] rounded-[80px] bg-[#eeefc2] blur-[56px]" />
        <label className="mx-6 flex h-[111px] items-center gap-5 rounded-[33px] bg-[#f7f8fd] pl-[51px]">
          <svg viewBox="0 0 50 50" className="size-[50px] shrink-0" fill="none" stroke="#8f9195" strokeWidth="4.200" strokeLinecap="round" aria-hidden="true"><circle cx="20" cy="20" r="17.800" /><path d="M33 33L47 47" /></svg>
          <input type="text" aria-label="Search Emoji" placeholder="Search Emoji" className="w-full bg-transparent text-[48px] text-[#1c1c1e] outline-none placeholder:text-[#8f9195]" />
        </label>

        <div className="flex gap-[42px] overflow-hidden pl-[9px]">
          <EmojiSection title="FREQUENTLY USED" names={FREQUENT} grid="grid h-[578px] w-[828px] grid-cols-6 grid-rows-5" />
          <EmojiSection title="SMILEYS & PEOPLE" names={SMILEYS} grid="grid h-[578px] w-[276px] grid-cols-2 grid-rows-5" />
        </div>

        <div className="mt-[18px] flex items-center pr-10 pl-[31px]">
          <div className="flex flex-1">
            {CATEGORIES.map((c, i) => (
              <button key={c.name} type="button" aria-label={c.name} className="flex flex-1 justify-center">
                <span className={i === 0 ? "flex size-[90px] items-center justify-center rounded-full bg-[#cdd1da] text-black" : "flex size-[90px] items-center justify-center text-[#77786f]"}>{c.icon}</span>
              </button>
            ))}
          </div>
          <button type="button" aria-label="Delete" className="ml-[47px]">
            <svg viewBox="0 0 65 54" className="h-[54px] w-[65px]" fill="none" stroke="#2d2d2d" strokeWidth="4.500" strokeLinecap="round" strokeLinejoin="round" aria-hidden="true">
              <path d="M28 2.500H56Q62.500 2.500 62.500 9V45Q62.500 51.500 56 51.500H28Q25 51.500 22.500 49L4 30Q1.500 27 4 24L22.500 5Q25 2.500 28 2.500ZM27.500 17L48.500 37.500M48.500 17L27.500 37.500" />
            </svg>
          </button>
        </div>

        <div className="mt-[74px] flex h-[94px] items-start justify-between pr-[101px] pl-20">
          <button type="button" className="self-end text-[46px] leading-[60px] text-[#50565c]">ABC</button>
          <button type="button" aria-label="Dictate">
            <svg viewBox="0 0 56 85" className="h-[85px] w-[56px]" fill="none" stroke="#50565c" strokeWidth="4.800" strokeLinecap="round" aria-hidden="true">
              <rect x="16.500" y="2.500" width="23" height="50" rx="11.500" /><path d="M2.800 34V42C2.800 57 14 66.500 28 66.500C42 66.500 53.200 57 53.200 42V34M28 67V81M10.500 82H45.500" />
            </svg>
          </button>
        </div>
        <div className="mx-auto mt-[33px] mb-6 h-[15px] w-[420px] rounded-full bg-black" />
      </div>
    </div>
  );
}
